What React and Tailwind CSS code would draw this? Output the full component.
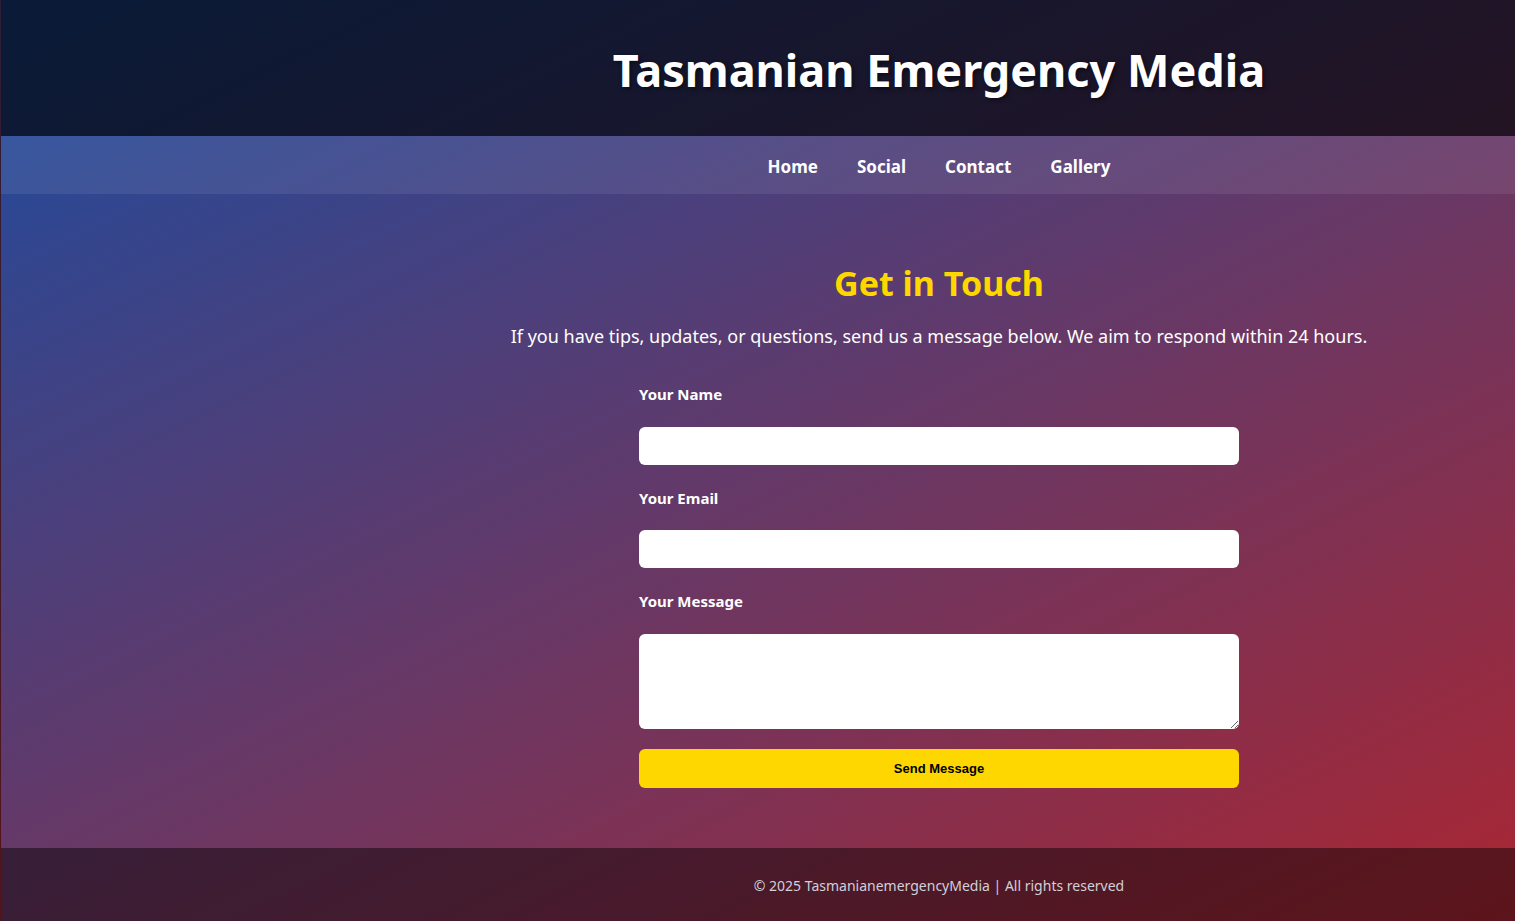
import React from "react";

export default function App() {
  return (
    <div
      className="min-h-[921px] w-full flex flex-col border-l border-black/50 bg-[linear-gradient(154deg,#1c4ca0_0%,#aa2632_100%)] font-['Noto_Sans',sans-serif]"
    >
      <header className="h-[136px] bg-black/65 flex items-center pl-[362px]">
        <h1 className="flex-1 text-center text-white font-bold text-[45px] leading-none [text-shadow:2px_2px_4px_rgba(0,0,0,0.5)] pt-[2px]">
          Tasmanian Emergency Media
        </h1>
      </header>
      <nav className="h-[58px] bg-white/[0.08] flex items-center pl-[362px] pt-[3px]">
        <ul className="flex-1 flex justify-center gap-[39px] text-white font-bold text-[17px]">
          <li>Home</li>
          <li>Social</li>
          <li>Contact</li>
          <li>Gallery</li>
        </ul>
      </nav>
      <main className="flex-1 pl-[362px] pt-[67px] pb-[60px]">
        <div className="flex flex-col items-center">
          <h2 className="text-[#ffd700] font-bold text-[34px] leading-[44px]">Get in Touch</h2>
          <p className="mt-[18px] text-white text-[18px] leading-[26px]">
            If you have tips, updates, or questions, send us a message below. We aim to respond within 24 hours.
          </p>
          <form className="w-[600px] mt-[35px] flex flex-col" onSubmit={(e) => e.preventDefault()}>
            <label className="text-white font-bold text-[15px] leading-[20px]">Your Name</label>
            <input type="text" className="mt-[23px] h-[38px] bg-white rounded-[6px] outline-none px-2" />
            <label className="mt-[23px] text-white font-bold text-[15px] leading-[20px]">Your Email</label>
            <input type="email" className="mt-[22px] h-[38px] bg-white rounded-[6px] outline-none px-2" />
            <label className="mt-[23px] text-white font-bold text-[15px] leading-[20px]">Your Message</label>
            <textarea className="mt-[23px] h-[95px] bg-white rounded-[6px] outline-none px-2 resize-y" />
            <button
              type="submit"
              className="mt-[20px] h-[39px] bg-[#ffd700] rounded-[6px] text-black font-bold text-[13px] font-['Liberation_Sans',Arial,sans-serif]"
            >
              Send Message
            </button>
          </form>
        </div>
      </main>
      <footer className="h-[73px] bg-black/45 flex items-center pl-[362px] pt-[2px]">
        <p className="flex-1 text-center text-[#d0d0d8] text-[14px]">
          © 2025 TasmanianemergencyMedia | All rights reserved
        </p>
      </footer>
    </div>
  );
}
